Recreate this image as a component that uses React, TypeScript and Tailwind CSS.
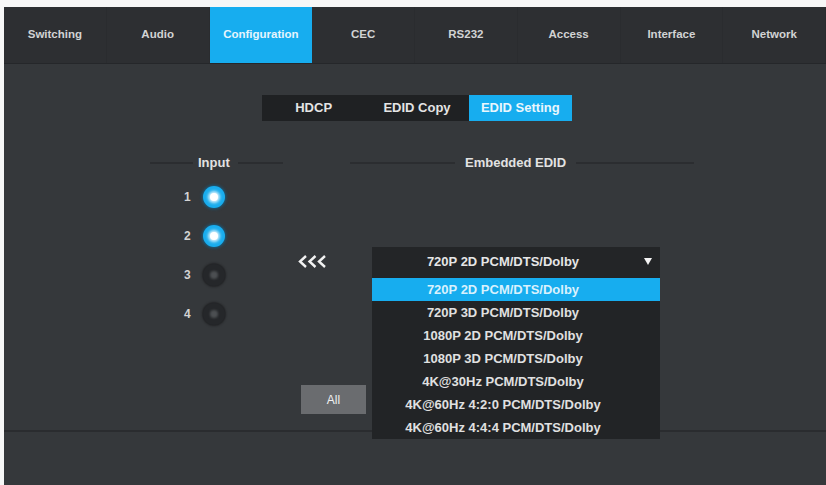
const tabs = ["Switching", "Audio", "Configuration", "CEC", "RS232", "Access", "Interface", "Network"];
const subTabs = ["HDCP", "EDID Copy", "EDID Setting"];
const edids = [
  "720P 2D PCM/DTS/Dolby",
  "720P 3D PCM/DTS/Dolby",
  "1080P 2D PCM/DTS/Dolby",
  "1080P 3D PCM/DTS/Dolby",
  "4K@30Hz PCM/DTS/Dolby",
  "4K@60Hz 4:2:0 PCM/DTS/Dolby",
  "4K@60Hz 4:4:4 PCM/DTS/Dolby",
];
const inputs = [
  { n: 1, on: true },
  { n: 2, on: true },
  { n: 3, on: false },
  { n: 4, on: false },
];

function Radio({ on }: { on: boolean }) {
  if (on) {
    return (
      <div className="w-[22px] h-[22px] rounded-full bg-[#19adee] shadow-[0_0_3px_1px_rgba(10,110,160,0.7)] flex items-center justify-center">
        <div className="w-[8px] h-[8px] rounded-full bg-white shadow-[0_0_3px_2px_rgba(255,255,255,0.8)]" />
      </div>
    );
  }
  return (
    <div className="w-[22px] h-[22px] rounded-full bg-[#25272a] shadow-[0_0_2px_1px_rgba(20,20,22,0.6)] flex items-center justify-center">
      <div className="w-[8px] h-[8px] rounded-full bg-[#4c4f52] blur-[1px]" />
    </div>
  );
}

function Chevrons() {
  return (
    <svg width="31" height="13" viewBox="0 0 31 13" fill="none" stroke="#f2f2f2" strokeWidth="2.4" strokeLinejoin="miter">
      <polyline points="8,1 2,6.5 8,12" />
      <polyline points="17.5,1 11.5,6.5 17.5,12" />
      <polyline points="27,1 21,6.5 27,12" />
    </svg>
  );
}

export default function App() {
  return (
    <div className="w-[826px] h-[485px] bg-[#f7f7f7] pt-[7px] pl-[4px] overflow-hidden font-['Liberation_Sans',Arial,sans-serif]">
      <div className="h-full flex flex-col bg-[#35383b]">
        {/* top menu */}
        <nav className="grid grid-cols-8 h-[57px] bg-[#2d2f32] border-b border-[#25272a]">
          {tabs.map((t) => (
            <div
              key={t}
              className={
                t === "Configuration"
                  ? "flex items-center justify-center text-[11.5px] font-bold bg-[#17adef] text-[#e6f5fd]"
                  : "flex items-center justify-center text-[11.5px] font-bold text-[#d2d3d4] border-r border-[#2a2c2f]"
              }
            >
              {t}
            </div>
          ))}
        </nav>

        <div className="h-[366px] relative">
          {/* sub tabs */}
          <div className="mt-[31px] ml-[258px] w-[310px] h-[26px] flex bg-[#1f2123]">
            {subTabs.map((s) => (
              <div
                key={s}
                className={
                  s === "EDID Setting"
                    ? "flex-1 flex items-center justify-center text-[13px] font-bold bg-[#17adef] text-[#e9f6fd]"
                    : "flex-1 flex items-center justify-center text-[13px] font-bold text-[#e4e4e4]"
                }
              >
                {s}
              </div>
            ))}
          </div>

          {/* group headers */}
          <div className="mt-[32px] ml-[146px] h-5 flex items-center text-[13px] font-bold text-[#e2e2e2]">
            <div className="w-[133px] flex items-center">
              <div className="w-[43px] h-[2px] bg-[#2b2d30]" />
              <span className="ml-[5px]">Input</span>
              <div className="ml-2 flex-1 h-[2px] bg-[#2b2d30]" />
            </div>
            <div className="ml-[67px] flex items-center">
              <div className="w-[105px] h-[2px] bg-[#2b2d30]" />
              <span className="ml-[10px]">Embedded EDID</span>
              <div className="ml-[10px] w-[118px] h-[2px] bg-[#2b2d30]" />
            </div>
          </div>

          <div className="mt-1 ml-[146px] flex">
            {/* inputs */}
            <div className="w-[133px]">
              {inputs.map((i) => (
                <div key={i.n} className="h-[39px] flex items-center">
                  <span className="ml-[34px] w-[8px] text-[12px] font-bold text-[#d3d3d3]">{i.n}</span>
                  <div className="ml-[11px]">
                    <Radio on={i.on} />
                  </div>
                </div>
              ))}
            </div>

            {/* copy arrow + all */}
            <div className="w-[89px] flex flex-col">
              <div className="mt-[78px] ml-[15px]">
                <Chevrons />
              </div>
              <button className="mt-[117px] ml-[18px] w-[65px] h-[29px] bg-[#6a6c6f] text-[12px] text-[#f0f0f0]">
                All
              </button>
            </div>

            {/* edid select */}
            <div className="w-[288px] mt-[70px] relative self-start">
              <div className="h-[30px] bg-[#232527] flex items-center justify-center pr-[26px] text-[13px] font-bold text-[#e6e6e6]">
                720P 2D PCM/DTS/Dolby
                <svg className="absolute right-[8px] top-[11px]" width="8" height="7" viewBox="0 0 8 7">
                  <polygon points="0,0 8,0 4,7" fill="#f4f4f4" />
                </svg>
              </div>
              <ul className="absolute top-[30px] left-0 w-full z-10 bg-[#222426] pt-px">
                {edids.map((e, idx) => (
                  <li
                    key={e}
                    className={
                      idx === 0
                        ? "h-[23px] flex items-center justify-center pr-[26px] text-[13px] font-bold bg-[#17adef] text-[#d9f1fd]"
                        : "h-[23px] flex items-center justify-center pr-[26px] text-[13px] font-bold text-[#e0e0e0]"
                    }
                  >
                    {e}
                  </li>
                ))}
              </ul>
            </div>
          </div>
        </div>

        <div className="h-[2px] bg-[#2a2c2f]" />
        <div className="flex-1 bg-[#35383b]" />
      </div>
    </div>
  );
}
